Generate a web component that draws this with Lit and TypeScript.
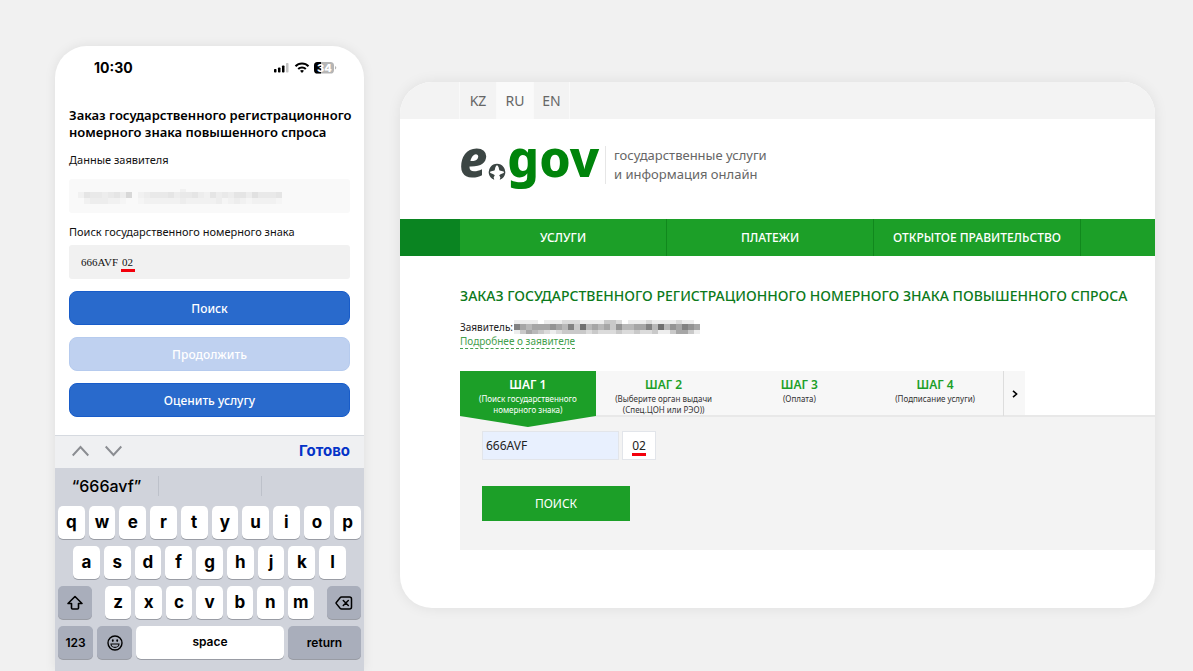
import { LitElement, html, svg, css } from "lit";
import { customElement, property } from "lit/decorators.js";

/* Censored name: each digit is the darkness of one 6px cell, rows are top, middle, bottom. */
@customElement("masked-name")
class MaskedName extends LitElement {
  static styles = css`
    :host { display: block; }
    svg { display: block; }
  `;
  @property({ attribute: false }) rows: string[] = [];
  @property({ attribute: false }) heights: number[] = [];
  @property({ type: Number }) strength = 1;
  render() {
    const cols = Math.max(...this.rows.map((r) => r.length));
    const total = this.heights.reduce((a, b) => a + b, 0);
    let y = 0;
    const cells = this.rows.map((row, i) => {
      const top = y;
      y += this.heights[i];
      return [...row].map((c, x) =>
        c === "0"
          ? null
          : svg`<rect x=${x * 6} y=${top} width="6" height=${this.heights[i]} fill="#000" fill-opacity=${(Number(c) * this.strength) / 100}></rect>`
      );
    });
    return html`<svg width=${cols * 6} height=${total} shape-rendering="crispEdges" aria-hidden="true">${cells}</svg>`;
  }
}

@customElement("phone-screen")
class PhoneScreen extends LitElement {
  static styles = css`
    :host {
      display: flex;
      flex-direction: column;
      background: #fff;
      border-radius: 32px 32px 0 0;
      overflow: hidden;
      box-shadow: 0 0 12px rgba(0, 0, 0, 0.08);
      font-family: "Noto Sans", "Open Sans", sans-serif;
      color: #111;
    }
    * { box-sizing: border-box; }
    button, input { font: inherit; color: inherit; margin: 0; padding: 0; border: 0; background: none; }
    .status {
      display: flex;
      align-items: center;
      justify-content: space-between;
      padding: 12px 27px 0 39px;
      height: 32px;
      font: 700 14px/20px Inter, sans-serif;
      color: #000;
    }
    .status svg { display: block; }
    .form { padding: 29px 14px 18px; display: flex; flex-direction: column; }
    h1 { margin: 0; font-size: 13px; line-height: 17px; font-weight: 600; color: #000; white-space: nowrap; }
    .label { font-size: 11px; line-height: 16px; margin-top: 11px; }
    .field {
      height: 34px;
      margin-top: 11px;
      border-radius: 3px;
      background: #f9f9f9;
      padding: 10px 9px;
    }
    .second { margin-top: 11px; }
    .plate {
      margin-top: 5px;
      background: #f1f1f1;
      display: flex;
      align-items: center;
      gap: 4px;
      padding: 0 12px;
      font: 11px/16px "Liberation Serif", serif;
    }
    .plate .number { width: 37px; }
    .region { position: relative; display: flex; }
    .region input { width: 12px; }
    .region::after {
      content: "";
      position: absolute;
      left: -1px;
      right: -1px;
      bottom: -2px;
      height: 3px;
      background: #f3000c;
    }
    .actions { display: grid; gap: 12px; margin-top: 12px; }
    .actions button {
      height: 34px;
      border-radius: 8px;
      background: #296acc;
      border: 1px solid #185cc9;
      color: #fff;
      font-size: 12px;
      font-weight: 500;
    }
    .actions button:disabled { background: #bfd1f0; border-color: #b6cbee; }
    .toolbar {
      display: flex;
      align-items: center;
      gap: 16px;
      height: 33px;
      padding: 0 14px 2px 17px;
      background: #eff0f2;
      border-top: 1px solid #d6dae0;
    }
    .toolbar button { display: flex; }
    .toolbar .done { margin-left: auto; color: #0433c8; font: 700 15px/20px Inter, sans-serif; }
    .keyboard {
      flex: 1;
      background: #d0d3db;
      padding-bottom: 11px;
      font-family: Inter, sans-serif;
      color: #000;
    }
    .suggestions {
      display: grid;
      grid-template-columns: repeat(3, 1fr);
      align-items: center;
      height: 38px;
      padding-bottom: 2px;
      text-align: center;
      font-size: 16px;
      font-weight: 500;
    }
    .suggestions button, .suggestions span { height: 20px; line-height: 20px; }
    .suggestions span { border-left: 1px solid #bdc1ca; }
    .keys { display: flex; flex-direction: column; gap: 7px; padding: 0 3px; }
    .row { display: flex; gap: 4px; }
    .mid { padding: 0 15px; }
    .row button {
      flex: 1;
      min-width: 0;
      height: 33px;
      border-radius: 5px;
      background: #fff;
      box-shadow: 0 1px 0 #999ca4;
      font-size: 17px;
      line-height: 20px;
      font-weight: 700;
      padding-bottom: 2px;
    }
    .letters { display: flex; gap: 4px; flex: 1; margin: 0 9px; }
    .row .dark {
      flex: 0 0 34px;
      background: #a9aebb;
      display: flex;
      align-items: center;
      justify-content: center;
      padding: 0;
    }
    .row .small { font-size: 12px; font-weight: 600; }
    .bottom .dark { flex-basis: 35px; }
    .bottom .dark.wide { flex-basis: 73px; }
  `;
  render() {
    const key = (k: string) => html`<button type="button">${k}</button>`;
    return html`
      <div class="status">
        <span>10:30</span>
        <svg width="64" height="14" viewBox="0 0 64 14" role="img" aria-label="Сигнал, Wi-Fi, заряд 34">
          <rect x="1" y="8" width="2.500" height="3.500" rx=".8"></rect>
          <rect x="5" y="6.500" width="2.500" height="5" rx=".8"></rect>
          <rect x="9" y="4.500" width="2.500" height="7" rx=".8"></rect>
          <rect x="13" y="2" width="2.500" height="9.500" rx=".8" fill="#c4c4c4"></rect>
          <g fill="none" stroke="#000" stroke-width="2">
            <path d="M22.500 5.200a9 9 0 0 1 13 0"></path>
            <path d="M25.200 8a5.400 5.400 0 0 1 7.600 0"></path>
          </g>
          <path d="M27 9.800a3 3 0 0 1 4 0l-2 2.200z"></path>
          <rect x="41" y="1" width="20" height="11.500" rx="3.600" fill="#b5b5b5"></rect>
          <path d="M44.600 1H48v11.500h-3.400a3.600 3.600 0 0 1-3.600-3.600V4.600A3.600 3.600 0 0 1 44.600 1z"></path>
          <path d="M62 5v3.400q1.300-.5 1.300-1.700T62 5z" fill="#b5b5b5"></path>
          <text x="51.500" y="10.600" text-anchor="middle" font-family="Inter" font-weight="800" font-size="11" fill="#fff">34</text>
        </svg>
      </div>
      <form class="form" @submit=${(e: Event) => e.preventDefault()}>
        <h1>Заказ государственного регистрационного<br />номерного знака повышенного спроса</h1>
        <div class="label">Данные заявителя</div>
        <div class="field">
          <masked-name
            .rows=${["0000000000000000020000000000000000", "2544345380234445344532534355364445", "0233322100122222232222231232122221"]}
            .heights=${[3, 6, 6]}
            .strength=${1.6}
          ></masked-name>
        </div>
        <label class="label second" for="m-plate">Поиск государственного номерного знака</label>
        <div class="field plate">
          <input class="number" id="m-plate" value="666AVF" />
          <span class="region"><input value="02" aria-label="Регион" /></span>
        </div>
        <div class="actions">
          <button>Поиск</button>
          <button type="button" disabled>Продолжить</button>
          <button type="button">Оценить услугу</button>
        </div>
      </form>
      <div class="toolbar">
        <button type="button" aria-label="Назад">
          <svg width="17" height="12" fill="none" stroke="#8b8d92" stroke-width="2"><path d="M.7 10.500 8.500 2l7.800 8.500"></path></svg>
        </button>
        <button type="button" aria-label="Вперёд">
          <svg width="17" height="12" fill="none" stroke="#8b8d92" stroke-width="2"><path d="M.7 1.500 8.500 10l7.800-8.500"></path></svg>
        </button>
        <button type="button" class="done">Готово</button>
      </div>
      <div class="keyboard">
        <div class="suggestions"><button type="button">“666avf”</button><span></span><span></span></div>
        <div class="keys">
          <div class="row">${[..."qwertyuiop"].map(key)}</div>
          <div class="row mid">${[..."asdfghjkl"].map(key)}</div>
          <div class="row">
            <button type="button" class="dark" aria-label="Shift">
              <svg width="18" height="16" viewBox="0 0 18 16" fill="none" stroke="#000" stroke-width="1.600" stroke-linejoin="round"><path d="M9 1.500 2 8.500h3.500V13q0 1 1 1h5q1 0 1-1V8.500H16z"></path></svg>
            </button>
            <div class="letters">${[..."zxcvbnm"].map(key)}</div>
            <button type="button" class="dark" aria-label="Удалить">
              <svg width="18" height="14" viewBox="0 0 18 14" fill="none" stroke="#000" stroke-width="1.500" stroke-linejoin="round" stroke-linecap="round"><path d="M6.500 1h8q2 0 2 2v8q0 2-2 2h-8q-.8 0-1.400-.7L1.300 7.600q-.5-.6 0-1.200l3.800-4.700Q5.700 1 6.500 1zM8.300 4.500l5 5m0-5-5 5"></path></svg>
            </button>
          </div>
          <div class="row bottom">
            <button type="button" class="dark small">123</button>
            <button type="button" class="dark" aria-label="Эмодзи">
              <svg width="16" height="16" viewBox="0 0 16 16" fill="none" stroke="#000" stroke-width="1.400"><circle cx="8" cy="8" r="7"></circle><path d="M4 9h8a4 3.400 0 0 1-8 0z" stroke-width="1.100"></path><g fill="#000" stroke="none"><ellipse cx="5.800" cy="5.600" rx=".9" ry="1.300"></ellipse><ellipse cx="10.200" cy="5.600" rx=".9" ry="1.300"></ellipse></g></svg>
            </button>
            <button type="button" class="small">space</button>
            <button type="button" class="dark small wide">return</button>
          </div>
        </div>
      </div>
    `;
  }
}

@customElement("portal-page")
class PortalPage extends LitElement {
  static styles = css`
    :host {
      display: block;
      background: #fff;
      border-radius: 32px;
      overflow: hidden;
      box-shadow: 0 0 14px rgba(0, 0, 0, 0.08);
      font-family: "Noto Sans", "Open Sans", sans-serif;
      color: #222;
    }
    * { box-sizing: border-box; }
    a { color: inherit; text-decoration: none; }
    button, input { font: inherit; color: inherit; margin: 0; padding: 0; border: 0; background: none; }
    .langs { display: flex; height: 37px; padding-left: 59px; background: #f3f3f3; color: #666; font-size: 14px; line-height: 37px; }
    .langs a { width: 37px; text-align: center; border-left: 1px solid #f9f9f9; }
    .langs a:last-child { border-right: 1px solid #f9f9f9; }
    .langs .current { background: #fafafa; }
    .header { display: flex; align-items: center; height: 100px; padding: 0 0 8px 59px; }
    .logo { display: flex; width: 146px; font-size: 50px; line-height: 60px; font-weight: 800; padding-bottom: 14px; }
    .logo .e { font-style: italic; color: #3c4644; }
    .logo svg { margin-top: 34px; flex: none; }
    .logo .gov { color: #00840b; }
    .tagline { padding-left: 8px; border-left: 1px solid #e6e6e6; font-size: 13px; line-height: 19px; color: #666; }
    nav { display: grid; grid-template-columns: 60fr 207fr 207fr 207fr 74fr; height: 37px; background: #1c9f28; color: #fff; font-size: 12px; font-weight: 500; line-height: 37px; text-align: center; }
    nav span { background: #0a8421; }
    nav a { border-right: 1px solid #11881d; }
    main { padding: 30px 0 58px 60px; }
    h1 { margin: 0; font-size: 14px; line-height: 20px; font-weight: 500; color: #0c7a1b; }
    .applicant { display: flex; margin-top: 14px; font-size: 10px; line-height: 14px; }
    .applicant masked-name { margin-left: 1px; }
    .more { display: block; width: max-content; font-size: 10px; line-height: 14px; color: #44a04d; border-bottom: 1px dashed #44a04d; }
    .steps { display: grid; grid-template-columns: repeat(4, 1fr) 22px; width: 565px; background: #f7f7f7; height: 45px; margin-top: 22px; text-align: center; }
    .step { position: relative; padding-top: 5px; font-size: 8px; line-height: 11px; color: #333; white-space: nowrap; }
    .step b { display: block; font-size: 12px; line-height: 17px; font-weight: 600; color: #1c9f28; }
    .step.active, .active b { color: #fff; }
    .active { background: #1c9f28; }
    .active::after {
      content: "";
      position: absolute;
      top: 100%;
      left: 0;
      right: 0;
      height: 11px;
      background: #1c9f28;
      clip-path: polygon(0 0, 100% 0, 50% 100%);
    }
    .next { border-left: 1px solid #ddd; display: flex; align-items: center; justify-content: center; }
    .panel { background: #f3f3f3; border-top: 2px solid #e8e8e8; margin-top: -1px; padding: 14px 22px 29px; }
    .inputs { display: flex; gap: 3px; font-size: 12px; line-height: 18px; }
    .inputs input { height: 29px; border: 1px solid #e2e5ea; }
    .number { width: 137px; padding: 0 3px; background: #e8f0fe; }
    .region { position: relative; display: flex; }
    .region input { width: 34px; background: #fff; text-align: center; }
    .region::after { content: ""; position: absolute; left: 10px; right: 10px; bottom: 4px; height: 3px; background: #f3000c; }
    .search { display: block; width: 148px; height: 35px; margin-top: 26px; background: #1c9f28; color: #fff; font-size: 12px; }
  `;
  render() {
    const step = (n: number, text: unknown, active = false) =>
      html`<a href="#step${n}" class="step ${active ? "active" : ""}"><b>ШАГ ${n}</b>${text}</a>`;
    return html`
      <div class="langs"><a href="#kz">KZ</a><a href="#ru" class="current">RU</a><a href="#en">EN</a></div>
      <header class="header">
        <a class="logo" href="#home" aria-label="egov">
          <span class="e">e</span>
          <svg width="20" height="20" viewBox="0 0 20 20">
            <path d="M6.500 17.600A8.300 8.300 0 1 1 13.500 17.600" fill="#3c4644"></path>
            <path d="M10 3Q8 4.500 7.800 7.700L7.400 8.600 3.400 9.600Q2.600 10.300 3.400 11L6.400 12.200 7.800 13.200 6.600 15.500 8 20h4l1.400-4.500L12.200 13.200l1.400-1L16.600 11q.8-.7 0-1.400l-4-1L12.200 7.700Q12 4.500 10 3z" fill="#fff"></path>
          </svg>
          <span class="gov">gov</span>
        </a>
        <div class="tagline">государственные услуги<br />и информация онлайн</div>
      </header>
      <nav>
        <span></span><a href="#services">УСЛУГИ</a><a href="#payments">ПЛАТЕЖИ</a><a href="#opengov">ОТКРЫТОЕ ПРАВИТЕЛЬСТВО</a>
      </nav>
      <main>
        <h1>ЗАКАЗ ГОСУДАРСТВЕННОГО РЕГИСТРАЦИОННОГО НОМЕРНОГО ЗНАКА ПОВЫШЕННОГО СПРОСА</h1>
        <div class="applicant">
          Заявитель:
          <masked-name
            .rows=${["1111011122211113320111211112110", "7545556547384545364455748465765", "1354321233332322232232231135531"]}
            .heights=${[4, 6, 4]}
            .strength=${7}
          ></masked-name>
        </div>
        <a class="more" href="#applicant">Подробнее о заявителе</a>
        <div class="steps">
          ${step(1, html`(Поиск государственного<br />номерного знака)`, true)}
          ${step(2, html`(Выберите орган выдачи<br />(Спец.ЦОН или РЭО))`)}
          ${step(3, "(Оплата)")}
          ${step(4, "(Подписание услуги)")}
          <button class="next" type="button" aria-label="Следующий шаг">
            <svg width="6" height="8" fill="none" stroke="#000" stroke-width="1.600"><path d="M1 .8 4.600 4 1 7.200"></path></svg>
          </button>
        </div>
        <form class="panel" @submit=${(e: Event) => e.preventDefault()}>
          <div class="inputs">
            <input class="number" value="666AVF" aria-label="Номерной знак" />
            <span class="region"><input value="02" aria-label="Регион" /></span>
          </div>
          <button class="search">ПОИСК</button>
        </form>
      </main>
    `;
  }
}

@customElement("app-root")
class AppRoot extends LitElement {
  static styles = css`
    :host {
      display: grid;
      grid-template-columns: 309fr 755fr;
      gap: 36px;
      box-sizing: border-box;
      min-height: 100vh;
      padding: 46px 38px 0 55px;
      background: #f1f1f1;
    }
    phone-screen { min-width: 0; }
    portal-page { align-self: start; margin-top: 36px; min-width: 0; }
  `;
  render() {
    return html`<phone-screen></phone-screen><portal-page></portal-page>`;
  }
}
